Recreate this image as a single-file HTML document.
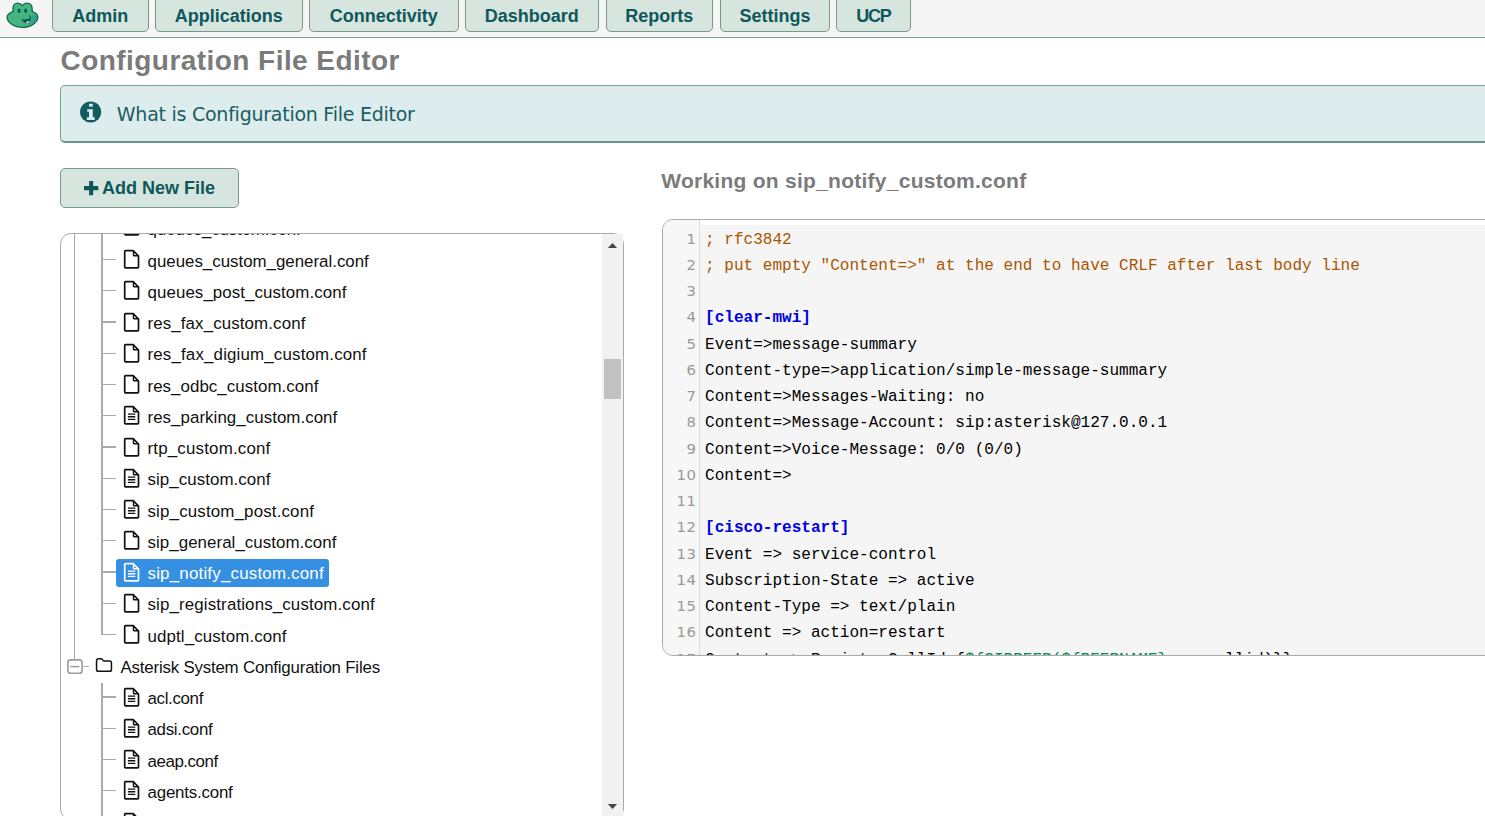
<!DOCTYPE html>
<html lang="en">
<head>
<meta charset="utf-8">
<title>Configuration File Editor</title>
<style>
html,body{margin:0;padding:0;}
body{width:1485px;height:816px;overflow:hidden;background:#fff;position:relative;font-family:"Liberation Sans",sans-serif;color:#111;}
.abs{position:absolute;}
/* nav */
#nav{left:0;top:0;width:1485px;height:37px;background:#f5f5f5;border-bottom:1px solid #7d9f92;}
.nb{position:absolute;top:-8px;height:40px;box-sizing:border-box;border:1px solid #78998d;border-radius:5px;background:#d7e5df;color:#0e585c;font-weight:bold;font-size:18px;line-height:46.600px;text-align:center;white-space:nowrap;}
/* title */
#title{left:60.5px;top:41.700px;font-weight:bold;font-size:28px;line-height:38px;color:#7b7b7b;letter-spacing:0.45px;white-space:nowrap;}
#info{left:60px;top:85px;width:1440px;height:58px;box-sizing:border-box;background:#ddecec;border:1px solid #76a594;border-bottom:2px solid #659886;border-radius:5px;}
#infotext{left:116.800px;top:99.600px;font-family:"DejaVu Sans",sans-serif;font-size:19px;letter-spacing:-0.250px;line-height:28px;color:#1b5c62;white-space:nowrap;}
#addbtn{left:60px;top:168px;width:179px;height:40px;box-sizing:border-box;border:1px solid #78998d;border-radius:5px;background:#d7e5df;color:#0e585c;font-weight:bold;font-size:18px;line-height:39.400px;white-space:nowrap;}
/* tree */
#tree{left:60px;top:233px;width:564px;height:587px;box-sizing:border-box;border:1px solid #aaa;border-radius:11px;overflow:hidden;background:#fff;}
.row{position:absolute;left:0;height:31.25px;white-space:nowrap;font-size:16.9px;color:#111;}
.row .t{position:absolute;top:0;line-height:31px;}
.ln{position:absolute;background:#aaa;}
/* editor */
#work{left:661.200px;top:161.600px;font-weight:bold;font-size:21px;line-height:38px;color:#7b7b7b;letter-spacing:0.260px;white-space:nowrap;}
#ed{left:662px;top:219px;width:900px;height:437px;box-sizing:border-box;border:1px solid #aaa;border-radius:11px;overflow:hidden;background:#fff;}
#gut{position:absolute;left:0;top:0;width:36px;height:100%;background:#f7f7f7;border-right:1px solid #ddd;}
#codebg{position:absolute;left:37px;top:5px;right:0;bottom:0;background:#f5f5f5;}
.cl{position:absolute;left:42px;height:26.25px;line-height:26.25px;font-family:"Liberation Mono",monospace;font-size:16.055px;white-space:pre;color:#000;}
.gn{position:absolute;left:0;width:33.300px;text-align:right;height:26.25px;line-height:26.25px;font-family:"DejaVu Sans",sans-serif;font-size:14.900px;letter-spacing:0.400px;color:#999;}
.c{color:#a50;} .h{color:#0000e6;font-weight:bold;} .v{color:#085;}
</style>
</head>
<body>
<div id="nav" class="abs">
<svg class="abs" style="left:0;top:0" width="48" height="32" viewBox="0 0 48 32">
<path d="M22.4 5.700C23.400 4.100 25 3.100 27 3.100C30 3.100 32 5.200 32 7.800C32 9.300 32.200 10.600 32.300 11.700C35.500 12.900 37.800 14.700 37.800 17C37.800 22 31 27.400 23 27.400C14 27.400 7.100 22.400 7.100 17.300C7.100 14.800 10 12.800 13.100 11.700C13 10.500 13.100 9.200 13.100 7.800C13.100 5.200 15 3.100 17.600 3.100C19.800 3.100 21.300 4.100 22.400 5.700Z" fill="#45b580" stroke="#0f6b52" stroke-width="1.400" stroke-linejoin="round"/>
<defs><linearGradient id="fg" x1="0" y1="0" x2="1" y2="0"><stop offset="0" stop-color="#1f9c92" stop-opacity="0"/><stop offset="1" stop-color="#1f9c92" stop-opacity="0.900"/></linearGradient></defs><path d="M29.500 17C32 15 35.800 14.800 37.100 16.800C37.100 21 32.500 25 26 26.700C28.500 24 29.500 20.500 29.500 17Z" fill="url(#fg)"/>
<ellipse cx="19" cy="10.800" rx="1.500" ry="2.200" fill="#0b5a4e"/><ellipse cx="25.700" cy="10.800" rx="1.500" ry="2.200" fill="#0b5a4e"/>
<path d="M21.200 19.100C24.500 19.900 28 19.200 31 17.200C30.600 20.600 29 23.600 27 23.600C25 23.600 23 21.600 21.200 19.100Z" fill="#0c5661"/>
<ellipse cx="27.700" cy="22.200" rx="1.700" ry="0.900" transform="rotate(-30 27.700 22.200)" fill="#f1dfb5"/>
<path d="M29.300 15.400L30.500 17.400" fill="none" stroke="#0f6b52" stroke-width="1.100" stroke-linecap="round"/>
</svg>
<div class="nb" style="left:52px;width:96.5px">Admin</div>
<div class="nb" style="left:155px;width:147.7px">Applications</div>
<div class="nb" style="left:309px;width:149.6px">Connectivity</div>
<div class="nb" style="left:465px;width:133.5px">Dashboard</div>
<div class="nb" style="left:606px;width:106.6px">Reports</div>
<div class="nb" style="left:720px;width:109.8px">Settings</div>
<div class="nb" style="left:836px;width:74.6px;letter-spacing:-1.300px">UCP</div>
</div>
<div id="title" class="abs">Configuration File Editor</div>
<div id="info" class="abs"></div>
<svg class="abs" style="left:80px;top:101px" width="22" height="22" viewBox="0 0 22 22">
<circle cx="10.65" cy="11" r="10.6" fill="#125b60"/>
<rect x="9" y="2.800" width="3.800" height="2.800" fill="#ddecec"/>
<path d="M7.200 8.350H12.800V16.200H14.700V19.050H6.800V16.200H9V10.750H7.200Z" fill="#ddecec"/>
</svg>
<div id="infotext" class="abs">What is Configuration File Editor</div>
<div id="addbtn" class="abs"><svg style="position:absolute;left:22.750px;top:12.200px" width="15" height="15" viewBox="0 0 15 15"><path d="M5.100 0h4.100v5.100h5.100v4.100H9.200v5.100H5.100V9.200H0V5.100h5.100z" fill="#0e585c"/></svg><span style="position:absolute;left:41px;top:0">Add New File</span></div>
<div id="tree" class="abs">
<div class="ln" style="left:12.70px;top:0.00px;width:1.1px;height:425px;"></div>
<div class="ln" style="left:40.30px;top:0.00px;width:1.5px;height:401.04999999999995px;"></div>
<div class="ln" style="left:40.30px;top:449.30px;width:1.5px;height:200px;"></div>
<div class="ln" style="left:41.00px;top:-6.45px;width:14px;height:1.3px;"></div>
<div style="position:absolute;left:62px;top:-17.55px;width:18px;height:21px"><svg style="position:absolute;left:0;top:0" width="18" height="21" viewBox="0 0 18 21" fill="none" stroke="#111" stroke-width="1.700" stroke-linejoin="round"><path d="M2.500 1.600H10.200L15.500 7V18.100Q15.500 18.900 14.700 18.900H2.500Q1.700 18.900 1.700 18.100V2.400Q1.700 1.600 2.500 1.600Z"/><path d="M10.500 1.900V5.900Q10.500 6.700 11.300 6.700H15.300" stroke-width="1.500"/><path d="M4.900 9.100h7.400M4.900 11.750h7.400M4.900 14.400h7.400" stroke-width="1.400"/></svg></div>
<div class="row" style="left:86.5px;top:-19.72px;color:#111"><span class="t" id="t0" style="letter-spacing:-0.16px;">queues_custom.conf</span></div>
<div class="ln" style="left:41.00px;top:24.80px;width:14px;height:1.3px;"></div>
<div style="position:absolute;left:62px;top:15.20px;width:18px;height:21px"><svg style="position:absolute;left:0;top:0" width="18" height="21" viewBox="0 0 18 21" fill="none" stroke="#111" stroke-width="1.700" stroke-linejoin="round"><path d="M2.500 1.600H10.200L15.500 7V18.100Q15.500 18.900 14.700 18.900H2.500Q1.700 18.900 1.700 18.100V2.400Q1.700 1.600 2.500 1.600Z"/><path d="M10.500 1.900V5.900Q10.500 6.700 11.300 6.700H15.300" stroke-width="1.500"/></svg></div>
<div class="row" style="left:86.5px;top:11.52px;color:#111"><span class="t" id="t1" style="letter-spacing:-0.012px;">queues_custom_general.conf</span></div>
<div class="ln" style="left:41.00px;top:56.05px;width:14px;height:1.3px;"></div>
<div style="position:absolute;left:62px;top:46.45px;width:18px;height:21px"><svg style="position:absolute;left:0;top:0" width="18" height="21" viewBox="0 0 18 21" fill="none" stroke="#111" stroke-width="1.700" stroke-linejoin="round"><path d="M2.500 1.600H10.200L15.500 7V18.100Q15.500 18.900 14.700 18.900H2.500Q1.700 18.900 1.700 18.100V2.400Q1.700 1.600 2.500 1.600Z"/><path d="M10.500 1.900V5.900Q10.500 6.700 11.300 6.700H15.300" stroke-width="1.500"/></svg></div>
<div class="row" style="left:86.5px;top:42.77px;color:#111"><span class="t" id="t2" style="letter-spacing:0.079px;">queues_post_custom.conf</span></div>
<div class="ln" style="left:41.00px;top:87.30px;width:14px;height:1.3px;"></div>
<div style="position:absolute;left:62px;top:77.70px;width:18px;height:21px"><svg style="position:absolute;left:0;top:0" width="18" height="21" viewBox="0 0 18 21" fill="none" stroke="#111" stroke-width="1.700" stroke-linejoin="round"><path d="M2.500 1.600H10.200L15.500 7V18.100Q15.500 18.900 14.700 18.900H2.500Q1.700 18.900 1.700 18.100V2.400Q1.700 1.600 2.500 1.600Z"/><path d="M10.500 1.900V5.900Q10.500 6.700 11.300 6.700H15.300" stroke-width="1.500"/></svg></div>
<div class="row" style="left:86.5px;top:74.02px;color:#111"><span class="t" id="t3" style="letter-spacing:0.113px;">res_fax_custom.conf</span></div>
<div class="ln" style="left:41.00px;top:118.55px;width:14px;height:1.3px;"></div>
<div style="position:absolute;left:62px;top:108.95px;width:18px;height:21px"><svg style="position:absolute;left:0;top:0" width="18" height="21" viewBox="0 0 18 21" fill="none" stroke="#111" stroke-width="1.700" stroke-linejoin="round"><path d="M2.500 1.600H10.200L15.500 7V18.100Q15.500 18.900 14.700 18.900H2.500Q1.700 18.900 1.700 18.100V2.400Q1.700 1.600 2.500 1.600Z"/><path d="M10.500 1.900V5.900Q10.500 6.700 11.300 6.700H15.300" stroke-width="1.500"/></svg></div>
<div class="row" style="left:86.5px;top:105.27px;color:#111"><span class="t" id="t4" style="letter-spacing:0.162px;">res_fax_digium_custom.conf</span></div>
<div class="ln" style="left:41.00px;top:149.80px;width:14px;height:1.3px;"></div>
<div style="position:absolute;left:62px;top:140.20px;width:18px;height:21px"><svg style="position:absolute;left:0;top:0" width="18" height="21" viewBox="0 0 18 21" fill="none" stroke="#111" stroke-width="1.700" stroke-linejoin="round"><path d="M2.500 1.600H10.200L15.500 7V18.100Q15.500 18.900 14.700 18.900H2.500Q1.700 18.900 1.700 18.100V2.400Q1.700 1.600 2.500 1.600Z"/><path d="M10.500 1.900V5.900Q10.500 6.700 11.300 6.700H15.300" stroke-width="1.500"/></svg></div>
<div class="row" style="left:86.5px;top:136.52px;color:#111"><span class="t" id="t5" style="letter-spacing:0.048px;">res_odbc_custom.conf</span></div>
<div class="ln" style="left:41.00px;top:181.05px;width:14px;height:1.3px;"></div>
<div style="position:absolute;left:62px;top:171.45px;width:18px;height:21px"><svg style="position:absolute;left:0;top:0" width="18" height="21" viewBox="0 0 18 21" fill="none" stroke="#111" stroke-width="1.700" stroke-linejoin="round"><path d="M2.500 1.600H10.200L15.500 7V18.100Q15.500 18.900 14.700 18.900H2.500Q1.700 18.900 1.700 18.100V2.400Q1.700 1.600 2.500 1.600Z"/><path d="M10.500 1.900V5.900Q10.500 6.700 11.300 6.700H15.300" stroke-width="1.500"/><path d="M4.900 9.100h7.400M4.900 11.750h7.400M4.900 14.400h7.400" stroke-width="1.400"/></svg></div>
<div class="row" style="left:86.5px;top:167.77px;color:#111"><span class="t" id="t6" style="letter-spacing:0.047px;">res_parking_custom.conf</span></div>
<div class="ln" style="left:41.00px;top:212.30px;width:14px;height:1.3px;"></div>
<div style="position:absolute;left:62px;top:202.70px;width:18px;height:21px"><svg style="position:absolute;left:0;top:0" width="18" height="21" viewBox="0 0 18 21" fill="none" stroke="#111" stroke-width="1.700" stroke-linejoin="round"><path d="M2.500 1.600H10.200L15.500 7V18.100Q15.500 18.900 14.700 18.900H2.500Q1.700 18.900 1.700 18.100V2.400Q1.700 1.600 2.500 1.600Z"/><path d="M10.500 1.900V5.900Q10.500 6.700 11.300 6.700H15.300" stroke-width="1.500"/></svg></div>
<div class="row" style="left:86.5px;top:199.02px;color:#111"><span class="t" id="t7" style="letter-spacing:0.189px;">rtp_custom.conf</span></div>
<div class="ln" style="left:41.00px;top:243.55px;width:14px;height:1.3px;"></div>
<div style="position:absolute;left:62px;top:233.95px;width:18px;height:21px"><svg style="position:absolute;left:0;top:0" width="18" height="21" viewBox="0 0 18 21" fill="none" stroke="#111" stroke-width="1.700" stroke-linejoin="round"><path d="M2.500 1.600H10.200L15.500 7V18.100Q15.500 18.900 14.700 18.900H2.500Q1.700 18.900 1.700 18.100V2.400Q1.700 1.600 2.500 1.600Z"/><path d="M10.500 1.900V5.900Q10.500 6.700 11.300 6.700H15.300" stroke-width="1.500"/><path d="M4.900 9.100h7.400M4.900 11.750h7.400M4.900 14.400h7.400" stroke-width="1.400"/></svg></div>
<div class="row" style="left:86.5px;top:230.27px;color:#111"><span class="t" id="t8" style="letter-spacing:0.064px;">sip_custom.conf</span></div>
<div class="ln" style="left:41.00px;top:274.80px;width:14px;height:1.3px;"></div>
<div style="position:absolute;left:62px;top:265.20px;width:18px;height:21px"><svg style="position:absolute;left:0;top:0" width="18" height="21" viewBox="0 0 18 21" fill="none" stroke="#111" stroke-width="1.700" stroke-linejoin="round"><path d="M2.500 1.600H10.200L15.500 7V18.100Q15.500 18.900 14.700 18.900H2.500Q1.700 18.900 1.700 18.100V2.400Q1.700 1.600 2.500 1.600Z"/><path d="M10.500 1.900V5.900Q10.500 6.700 11.300 6.700H15.300" stroke-width="1.500"/><path d="M4.900 9.100h7.400M4.900 11.750h7.400M4.900 14.400h7.400" stroke-width="1.400"/></svg></div>
<div class="row" style="left:86.5px;top:261.52px;color:#111"><span class="t" id="t9" style="letter-spacing:0.161px;">sip_custom_post.conf</span></div>
<div class="ln" style="left:41.00px;top:306.05px;width:14px;height:1.3px;"></div>
<div style="position:absolute;left:62px;top:296.45px;width:18px;height:21px"><svg style="position:absolute;left:0;top:0" width="18" height="21" viewBox="0 0 18 21" fill="none" stroke="#111" stroke-width="1.700" stroke-linejoin="round"><path d="M2.500 1.600H10.200L15.500 7V18.100Q15.500 18.900 14.700 18.900H2.500Q1.700 18.900 1.700 18.100V2.400Q1.700 1.600 2.500 1.600Z"/><path d="M10.500 1.900V5.900Q10.500 6.700 11.300 6.700H15.300" stroke-width="1.500"/></svg></div>
<div class="row" style="left:86.5px;top:292.77px;color:#111"><span class="t" id="t10" style="letter-spacing:0.052px;">sip_general_custom.conf</span></div>
<div class="ln" style="left:41.00px;top:337.30px;width:14px;height:1.3px;"></div>
<div style="position:absolute;left:55px;top:325px;width:213px;height:28px;background:#358fe2;border-radius:3px"></div>
<div style="position:absolute;left:62px;top:327.70px;width:18px;height:21px"><svg style="position:absolute;left:0;top:0" width="18" height="21" viewBox="0 0 18 21" fill="none" stroke="#fff" stroke-width="1.700" stroke-linejoin="round"><path d="M2.500 1.600H10.200L15.500 7V18.100Q15.500 18.900 14.700 18.900H2.500Q1.700 18.900 1.700 18.100V2.400Q1.700 1.600 2.500 1.600Z"/><path d="M10.500 1.900V5.900Q10.500 6.700 11.300 6.700H15.300" stroke-width="1.500"/><path d="M4.900 9.100h7.400M4.900 11.750h7.400M4.900 14.400h7.400" stroke-width="1.400"/></svg></div>
<div class="row" style="left:86.5px;top:324.02px;color:#fff"><span class="t" id="t11" style="letter-spacing:0.204px;">sip_notify_custom.conf</span></div>
<div class="ln" style="left:41.00px;top:368.55px;width:14px;height:1.3px;"></div>
<div style="position:absolute;left:62px;top:358.95px;width:18px;height:21px"><svg style="position:absolute;left:0;top:0" width="18" height="21" viewBox="0 0 18 21" fill="none" stroke="#111" stroke-width="1.700" stroke-linejoin="round"><path d="M2.500 1.600H10.200L15.500 7V18.100Q15.500 18.900 14.700 18.900H2.500Q1.700 18.900 1.700 18.100V2.400Q1.700 1.600 2.500 1.600Z"/><path d="M10.500 1.900V5.900Q10.500 6.700 11.300 6.700H15.300" stroke-width="1.500"/></svg></div>
<div class="row" style="left:86.5px;top:355.27px;color:#111"><span class="t" id="t12" style="letter-spacing:0.133px;">sip_registrations_custom.conf</span></div>
<div class="ln" style="left:41.00px;top:399.80px;width:14px;height:1.3px;"></div>
<div style="position:absolute;left:62px;top:390.20px;width:18px;height:21px"><svg style="position:absolute;left:0;top:0" width="18" height="21" viewBox="0 0 18 21" fill="none" stroke="#111" stroke-width="1.700" stroke-linejoin="round"><path d="M2.500 1.600H10.200L15.500 7V18.100Q15.500 18.900 14.700 18.900H2.500Q1.700 18.900 1.700 18.100V2.400Q1.700 1.600 2.500 1.600Z"/><path d="M10.500 1.900V5.900Q10.500 6.700 11.300 6.700H15.300" stroke-width="1.500"/></svg></div>
<div class="row" style="left:86.5px;top:386.52px;color:#111"><span class="t" id="t13" style="letter-spacing:0.118px;">udptl_custom.conf</span></div>
<div class="ln" style="left:21.80px;top:431.55px;width:6.1px;height:1.3px;background:#b0b0b0;"></div>
<svg style="position:absolute;left:5px;top:424.00px" width="18" height="17" viewBox="0 0 18 17"><rect x="1.900" y="1.900" width="14.150" height="13.350" rx="2.600" fill="#fff" stroke="#9c9c9c" stroke-width="1.600"/><rect x="4.300" y="7.850" width="9.100" height="1.500" fill="#9c9c9c"/></svg>
<svg style="position:absolute;left:34px;top:423.00px" width="18" height="16" viewBox="0 0 18 16" fill="none" stroke="#111" stroke-width="1.500" stroke-linejoin="round"><path d="M1.550 3.650Q1.550 1.650 3.550 1.650H6.300Q7.300 1.650 7.600 2.850Q7.900 4.050 9.100 4.050H14.650Q16.450 4.050 16.450 5.850V12.450Q16.450 14.250 14.650 14.250H3.350Q1.550 14.250 1.550 12.450Z"/></svg>
<div class="row" style="left:59.5px;top:417.77px"><span class="t" id="t14" style="letter-spacing:-0.206px">Asterisk System Configuration Files</span></div>
<div class="ln" style="left:41.00px;top:462.30px;width:14px;height:1.3px;"></div>
<div style="position:absolute;left:62px;top:452.70px;width:18px;height:21px"><svg style="position:absolute;left:0;top:0" width="18" height="21" viewBox="0 0 18 21" fill="none" stroke="#111" stroke-width="1.700" stroke-linejoin="round"><path d="M2.500 1.600H10.200L15.500 7V18.100Q15.500 18.900 14.700 18.900H2.500Q1.700 18.900 1.700 18.100V2.400Q1.700 1.600 2.500 1.600Z"/><path d="M10.500 1.900V5.900Q10.500 6.700 11.300 6.700H15.300" stroke-width="1.500"/><path d="M4.900 9.100h7.400M4.900 11.750h7.400M4.900 14.400h7.400" stroke-width="1.400"/></svg></div>
<div class="row" style="left:86.5px;top:449.02px;color:#111"><span class="t" id="t15" style="letter-spacing:-0.34px;">acl.conf</span></div>
<div class="ln" style="left:41.00px;top:493.55px;width:14px;height:1.3px;"></div>
<div style="position:absolute;left:62px;top:483.95px;width:18px;height:21px"><svg style="position:absolute;left:0;top:0" width="18" height="21" viewBox="0 0 18 21" fill="none" stroke="#111" stroke-width="1.700" stroke-linejoin="round"><path d="M2.500 1.600H10.200L15.500 7V18.100Q15.500 18.900 14.700 18.900H2.500Q1.700 18.900 1.700 18.100V2.400Q1.700 1.600 2.500 1.600Z"/><path d="M10.500 1.900V5.900Q10.500 6.700 11.300 6.700H15.300" stroke-width="1.500"/><path d="M4.900 9.100h7.400M4.900 11.750h7.400M4.900 14.400h7.400" stroke-width="1.400"/></svg></div>
<div class="row" style="left:86.5px;top:480.27px;color:#111"><span class="t" id="t16" style="letter-spacing:-0.301px;">adsi.conf</span></div>
<div class="ln" style="left:41.00px;top:524.80px;width:14px;height:1.3px;"></div>
<div style="position:absolute;left:62px;top:515.20px;width:18px;height:21px"><svg style="position:absolute;left:0;top:0" width="18" height="21" viewBox="0 0 18 21" fill="none" stroke="#111" stroke-width="1.700" stroke-linejoin="round"><path d="M2.500 1.600H10.200L15.500 7V18.100Q15.500 18.900 14.700 18.900H2.500Q1.700 18.900 1.700 18.100V2.400Q1.700 1.600 2.500 1.600Z"/><path d="M10.500 1.900V5.900Q10.500 6.700 11.300 6.700H15.300" stroke-width="1.500"/><path d="M4.900 9.100h7.400M4.900 11.750h7.400M4.900 14.400h7.400" stroke-width="1.400"/></svg></div>
<div class="row" style="left:86.5px;top:511.52px;color:#111"><span class="t" id="t17" style="letter-spacing:-0.434px;">aeap.conf</span></div>
<div class="ln" style="left:41.00px;top:556.05px;width:14px;height:1.3px;"></div>
<div style="position:absolute;left:62px;top:546.45px;width:18px;height:21px"><svg style="position:absolute;left:0;top:0" width="18" height="21" viewBox="0 0 18 21" fill="none" stroke="#111" stroke-width="1.700" stroke-linejoin="round"><path d="M2.500 1.600H10.200L15.500 7V18.100Q15.500 18.900 14.700 18.900H2.500Q1.700 18.900 1.700 18.100V2.400Q1.700 1.600 2.500 1.600Z"/><path d="M10.500 1.900V5.900Q10.500 6.700 11.300 6.700H15.300" stroke-width="1.500"/><path d="M4.900 9.100h7.400M4.900 11.750h7.400M4.900 14.400h7.400" stroke-width="1.400"/></svg></div>
<div class="row" style="left:86.5px;top:542.77px;color:#111"><span class="t" id="t18" style="letter-spacing:-0.204px;">agents.conf</span></div>
<div class="ln" style="left:41.00px;top:587.30px;width:14px;height:1.3px;"></div>
<div style="position:absolute;left:62px;top:577.70px;width:18px;height:21px"><svg style="position:absolute;left:0;top:0" width="18" height="21" viewBox="0 0 18 21" fill="none" stroke="#111" stroke-width="1.700" stroke-linejoin="round"><path d="M2.500 1.600H10.200L15.500 7V18.100Q15.500 18.900 14.700 18.900H2.500Q1.700 18.900 1.700 18.100V2.400Q1.700 1.600 2.500 1.600Z"/><path d="M10.500 1.900V5.900Q10.500 6.700 11.300 6.700H15.300" stroke-width="1.500"/><path d="M4.900 9.100h7.400M4.900 11.750h7.400M4.900 14.400h7.400" stroke-width="1.400"/></svg></div>
<div class="row" style="left:86.5px;top:574.02px;color:#111"><span class="t" id="t19" style="letter-spacing:0.25px;">alarmreceiver.conf</span></div>
</div>
<div class="abs" style="left:602px;top:234px;width:21px;height:582px;background:#f1f1f1"></div>
<div class="abs" style="left:604px;top:359px;width:17px;height:40px;background:#c1c1c1"></div>
<svg class="abs" style="left:602px;top:234px" width="21" height="21" viewBox="0 0 21 21"><path d="M5.900 14L10.500 8.900L15.100 14z" fill="#454545"/></svg>
<svg class="abs" style="left:602px;top:795px" width="21" height="21" viewBox="0 0 21 21"><path d="M5.900 9L10.500 14.100L15.100 9z" fill="#454545"/></svg>
<div id="work" class="abs">Working on sip_notify_custom.conf</div>
<div id="ed" class="abs">
<div id="gut"></div><div id="codebg"></div>
<div class="gn" style="top:5.50px">1</div>
<div class="cl" style="top:6.50px"><span class="c">; rfc3842</span></div>
<div class="gn" style="top:31.75px">2</div>
<div class="cl" style="top:32.75px"><span class="c">; put empty &quot;Content=&gt;&quot; at the end to have CRLF after last body line</span></div>
<div class="gn" style="top:58.00px">3</div>
<div class="cl" style="top:59.00px"></div>
<div class="gn" style="top:84.25px">4</div>
<div class="cl" style="top:85.25px"><span class="h">[clear-mwi]</span></div>
<div class="gn" style="top:110.50px">5</div>
<div class="cl" style="top:111.50px">Event=&gt;message-summary</div>
<div class="gn" style="top:136.75px">6</div>
<div class="cl" style="top:137.75px">Content-type=&gt;application/simple-message-summary</div>
<div class="gn" style="top:163.00px">7</div>
<div class="cl" style="top:164.00px">Content=&gt;Messages-Waiting: no</div>
<div class="gn" style="top:189.25px">8</div>
<div class="cl" style="top:190.25px">Content=&gt;Message-Account: sip:asterisk@127.0.0.1</div>
<div class="gn" style="top:215.50px">9</div>
<div class="cl" style="top:216.50px">Content=&gt;Voice-Message: 0/0 (0/0)</div>
<div class="gn" style="top:241.75px">10</div>
<div class="cl" style="top:242.75px">Content=&gt;</div>
<div class="gn" style="top:268.00px">11</div>
<div class="cl" style="top:269.00px"></div>
<div class="gn" style="top:294.25px">12</div>
<div class="cl" style="top:295.25px"><span class="h">[cisco-restart]</span></div>
<div class="gn" style="top:320.50px">13</div>
<div class="cl" style="top:321.50px">Event =&gt; service-control</div>
<div class="gn" style="top:346.75px">14</div>
<div class="cl" style="top:347.75px">Subscription-State =&gt; active</div>
<div class="gn" style="top:373.00px">15</div>
<div class="cl" style="top:374.00px">Content-Type =&gt; text/plain</div>
<div class="gn" style="top:399.25px">16</div>
<div class="cl" style="top:400.25px">Content =&gt; action=restart</div>
<div class="gn" style="top:425.50px">17</div>
<div class="cl" style="top:426.50px">Content =&gt; RegisterCallId={<span class="v">${SIPPEER(${PEERNAME}</span>,regcallid)}}</div>
</div>
</body>
</html>
